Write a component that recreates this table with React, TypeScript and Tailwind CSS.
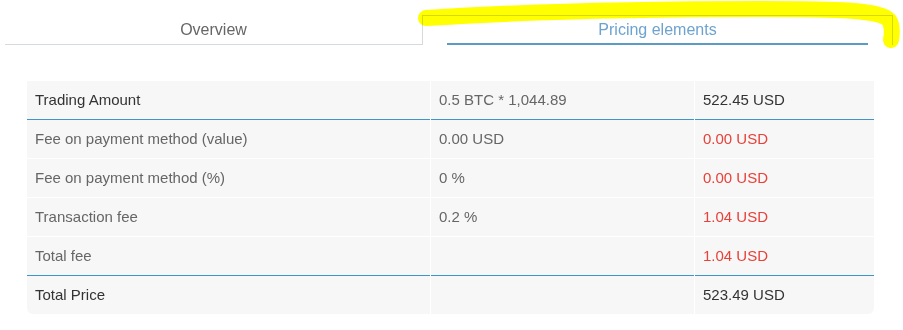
import React from "react";

type Row = {
  label: string;
  detail: string;
  amount: string;
  strong?: boolean;
  red?: boolean;
  lineBelow?: boolean;
};

const rows: Row[] = [
  { label: "Trading Amount", detail: "0.5 BTC * 1,044.89", amount: "522.45 USD", strong: true, lineBelow: true },
  { label: "Fee on payment method (value)", detail: "0.00 USD", amount: "0.00 USD", red: true },
  { label: "Fee on payment method (%)", detail: "0 %", amount: "0.00 USD", red: true },
  { label: "Transaction fee", detail: "0.2 %", amount: "1.04 USD", red: true },
  { label: "Total fee", detail: "", amount: "1.04 USD", red: true, lineBelow: true },
  { label: "Total Price", detail: "", amount: "523.49 USD", strong: true },
];

export default function App() {
  return (
    <div
      className="relative w-[903px] h-[330px] bg-white overflow-hidden"
      style={{ fontFamily: '"Liberation Sans", Arial, sans-serif' }}
    >
      {/* TABS */}
      <div className="flex ml-[5px] w-[888px] pt-[15px]">
        <div className="w-[417px] h-[30px] border-b border-[#d7dadd] flex items-center justify-center text-[16px] text-[#666]">
          Overview
        </div>
        <div className="flex-1 h-[30px] border-l border-t border-r border-[#d7dadd] px-[24px] flex">
          <div className="flex-1 border-b-2 border-[#5b9bc5] flex items-center justify-center text-[16px] text-[#6ea3cf]">
            Pricing elements
          </div>
        </div>
      </div>

      {/* PRICING TABLE */}
      <div className="ml-[27px] mt-[36px] w-[847px] rounded-b-md overflow-hidden text-[15px] bg-white flex flex-col">
        {rows.map((row, i) => {
          const last = i === rows.length - 1;
          return (
            <React.Fragment key={i}>
              <div className="grid grid-cols-[403px_263px_179px] gap-x-px h-[38px] bg-white">
                <div className={"bg-[#f7f7f7] flex items-center pl-[8px] " + (row.strong ? "text-[#333]" : "text-[#666]")}>
                  {row.label}
                </div>
                <div className="bg-[#f7f7f7] flex items-center pl-[8px] text-[#666]">{row.detail}</div>
                <div className={"bg-[#f7f7f7] flex items-center pl-[8px] " + (row.red ? "text-[#e8413a]" : "text-[#333]")}>
                  {row.amount}
                </div>
              </div>
              {!last &&
                (row.lineBelow ? (
                  <div className="grid grid-cols-[403px_263px_179px] gap-x-px h-px bg-white">
                    <div className="bg-[#3f95c8]" />
                    <div className="bg-[#3f95c8]" />
                    <div className="bg-[#3f95c8]" />
                  </div>
                ) : (
                  <div className="h-px bg-white" />
                ))}
            </React.Fragment>
          );
        })}
      </div>

      {/* highlighter mark */}
      <svg
        className="absolute left-0 top-0 pointer-events-none mix-blend-multiply"
        width="903"
        height="60"
        viewBox="0 0 903 60"
      >
        <path
          d="M 426 18 C 520 12, 640 9, 760 9 C 840 9, 880 10, 889 20 C 893 26, 892 34, 891 40"
          fill="none"
          stroke="#ffff00"
          strokeWidth="16"
          strokeLinecap="round"
          strokeLinejoin="round"
        />
      </svg>
    </div>
  );
}
